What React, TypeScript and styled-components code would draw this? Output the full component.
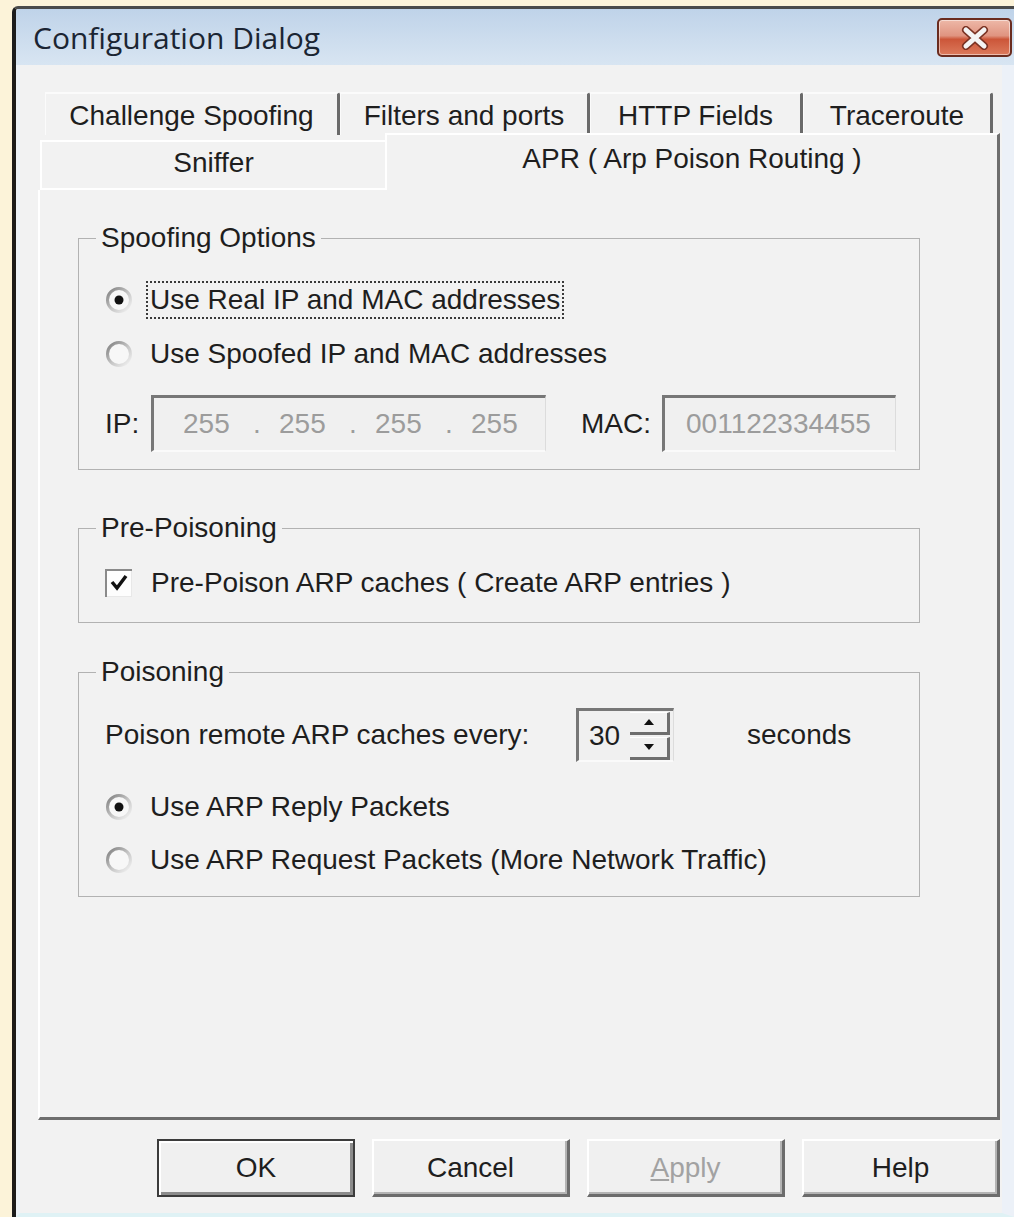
import React from "react";
import styled, { createGlobalStyle } from "styled-components";

const GlobalStyle = createGlobalStyle`
  html, body {
    margin: 0;
    padding: 0;
    background: #fcf3d9;
    overflow: hidden;
  }
  body {
    font-family: "Liberation Sans", Arial, sans-serif;
    color: #1e1e1e;
  }
`;

const Desktop = styled.div`
  width: 1014px;
  height: 1217px;
  padding: 6px 0 0 12px;
  box-sizing: border-box;
  overflow: hidden;
`;

const Window = styled.div`
  width: 1002px;
  box-sizing: border-box;
  border-left: 4px solid #1c1c1c;
  border-top: 3px solid #4a4a4a;
  border-top-left-radius: 6px;
  overflow: hidden;
`;

const TitleBar = styled.div`
  height: 56px;
  display: flex;
  align-items: flex-start;
  justify-content: space-between;
  padding: 0 2px 0 17px;
  background: linear-gradient(#bfd3e9, #d8e5f2);
`;

const Title = styled.div`
  font-family: "Open Sans", "Noto Sans", sans-serif;
  font-size: 30px;
  line-height: 58px;
  color: #1b2533;
`;

const CloseButton = styled.div`
  margin-top: 9px;
  width: 75px;
  height: 39px;
  box-sizing: border-box;
  border: 2px solid #6a2c1f;
  border-radius: 5px;
  background: linear-gradient(#edb8a8 0%, #e09480 45%, #cc5639 55%, #dc7a5c 100%);
  box-shadow: inset 0 0 0 1px rgba(255, 255, 255, 0.5);
  display: flex;
  align-items: center;
  justify-content: center;
`;

const Client = styled.div`
  display: flex;
  flex-direction: column;
  padding: 27px 2px 16px 18px;
  border-left: 4px solid #eef3f9;
  border-right: 12px solid #ecf1f8;
  border-bottom: 4px solid #dff2f5;
  background: #f2f2f2;
`;

/* ---------- tabs ---------- */

const TabRow = styled.div<{ $h: number; $indent: number }>`
  display: flex;
  align-items: flex-end;
  height: ${(p) => p.$h}px;
  margin-left: ${(p) => p.$indent}px;
`;

const BackTab = styled.div<{ $w: number }>`
  width: ${(p) => p.$w}px;
  height: 43px;
  align-self: flex-start;
  box-sizing: border-box;
  padding-top: 3px;
  border-top: 2px solid #fbfbfb;
  border-left: 1px solid #fbfbfb;
  border-right: 3px solid #6a6a6a;
  border-top-right-radius: 3px;
  font-size: 28px;
  display: flex;
  align-items: center;
  justify-content: center;
`;

const FrontTab = styled.div<{ $w: number; $h: number; $active?: boolean }>`
  width: ${(p) => p.$w}px;
  height: ${(p) => p.$h}px;
  box-sizing: border-box;
  padding-bottom: ${(p) => (p.$active ? 7 : 4)}px;
  border-top: 2px solid #fff;
  border-left: 2px solid #fff;
  border-right: ${(p) => (p.$active ? "3px solid #6e6e6e" : "none")};
  border-bottom: ${(p) => (p.$active ? "none" : "2px solid #fff")};
  background: #f2f2f2;
  font-size: 28px;
  display: flex;
  align-items: center;
  justify-content: center;
`;

const Panel = styled.div`
  width: 962px;
  height: 930px;
  box-sizing: border-box;
  padding: 32px 0 0 38px;
  border-left: 2px solid #fff;
  border-right: 3px solid #6e6e6e;
  border-bottom: 3px solid #6e6e6e;
  background: #f2f2f2;
`;

/* ---------- group boxes ---------- */

const Group = styled.fieldset<{ $mt: number; $pt: number; $pb: number }>`
  margin: ${(p) => p.$mt}px 0 0 0;
  width: 842px;
  min-inline-size: 0;
  box-sizing: border-box;
  padding: ${(p) => p.$pt}px 0 ${(p) => p.$pb}px 26px;
  border: 1px solid #b2b2b2;
`;

const Legend = styled.legend`
  margin-left: -9px;
  padding: 0 5px;
  font-size: 28px;
  line-height: 32px;
`;

const Row = styled.div<{ $h: number; $mt?: number; $gap?: number }>`
  display: flex;
  align-items: center;
  height: ${(p) => p.$h}px;
  margin-top: ${(p) => p.$mt ?? 0}px;
  gap: ${(p) => p.$gap ?? 0}px;
  font-size: 28px;
`;

const OptionText = styled.span<{ $focused?: boolean }>`
  line-height: 34px;
  padding: 0 2px;
  margin-left: -4px;
  border: 2px dotted ${(p) => (p.$focused ? "#3a3a3a" : "transparent")};
`;

const FieldLabel = styled.span<{ $w?: number }>`
  ${(p) => (p.$w ? `width: ${p.$w}px;` : "")}
  flex-shrink: 0;
`;

const SunkenBox = styled.div<{ $w: number; $h: number }>`
  width: ${(p) => p.$w}px;
  height: ${(p) => p.$h}px;
  box-sizing: border-box;
  border-top: 3px solid #777;
  border-left: 3px solid #777;
  border-right: 1px solid #dcdcdc;
  border-bottom: 2px solid #fafafa;
  background: #f0f0f0;
  display: flex;
  align-items: center;
  font-size: 28px;
`;

const GreyValue = styled.span<{ $w?: number }>`
  color: #9c9c9c;
  ${(p) => (p.$w ? `width: ${p.$w}px;` : "")}
`;

const SpinArrows = styled.div`
  margin-left: auto;
  width: 40px;
  height: 48px;
  display: flex;
  flex-direction: column;
  justify-content: space-between;
`;

const SpinButton = styled.div`
  height: 23px;
  box-sizing: border-box;
  border-right: 3px solid #6e6e6e;
  border-bottom: 3px solid #6e6e6e;
  border-top: 1px solid #fff;
  display: flex;
  align-items: center;
  justify-content: center;
`;

/* ---------- bottom buttons ---------- */

const ButtonBar = styled.div`
  width: 962px;
  margin-top: 19px;
  display: flex;
  justify-content: flex-end;
  gap: 17px;
`;

const DialogButton = styled.div<{ $default?: boolean; $disabled?: boolean }>`
  width: 198px;
  height: 58px;
  box-sizing: border-box;
  background: #f0f0f0;
  font-size: 28px;
  color: ${(p) => (p.$disabled ? "#a2a2a2" : "#1e1e1e")};
  display: flex;
  align-items: center;
  justify-content: center;
  border-style: solid;
  ${(p) =>
    p.$default
      ? `border-width: 2px;
         border-color: #3c3c3c;
         box-shadow: inset 2px 2px 0 #fff, inset -3px -3px 0 #8c8c8c;`
      : `border-width: 2px 3px 3px 2px;
         border-color: #fff #6c6c6c #6c6c6c #fff;
         box-shadow: inset -2px -2px 0 #b4b4b4;`}
`;

/* ---------- small drawn controls ---------- */

const RadioMark = ({ checked }: { checked?: boolean }) => (
  <svg width="28" height="28" viewBox="0 0 28 28">
    <defs>
      <linearGradient id={checked ? "rOn" : "rOff"} x1="0" y1="0" x2="1" y2="1">
        <stop offset="0" stopColor="#7e7e7e" />
        <stop offset="0.55" stopColor="#c8c8c8" />
        <stop offset="1" stopColor="#f4f4f4" />
      </linearGradient>
    </defs>
    <circle
      cx="14"
      cy="14"
      r="11.5"
      fill="#f7f7f7"
      stroke={`url(#${checked ? "rOn" : "rOff"})`}
      strokeWidth="3"
    />
    {checked && <circle cx="14" cy="14" r="4.5" fill="#111" />}
  </svg>
);

const CheckMark = () => (
  <svg width="27" height="28" viewBox="0 0 27 28">
    <rect x="0" y="0" width="27" height="28" fill="#fdfdfd" />
    <path d="M0 28V0h27" fill="none" stroke="#8a8a8a" strokeWidth="4" />
    <path d="M27 2v26H2" fill="none" stroke="#e8e8e8" strokeWidth="2" />
    <path d="M7 13l5 6 9-12" fill="none" stroke="#111" strokeWidth="3.5" />
  </svg>
);

const CloseGlyph = () => (
  <svg width="30" height="24" viewBox="0 0 30 24">
    <path d="M6 4l18 16M24 4L6 20" stroke="#7a3324" strokeWidth="8" strokeLinecap="round" />
    <path d="M6 4l18 16M24 4L6 20" stroke="#f4f4f4" strokeWidth="5" strokeLinecap="round" />
  </svg>
);

const Arrow = ({ up }: { up?: boolean }) => (
  <svg width="10" height="6" viewBox="0 0 10 6">
    <path d={up ? "M5 0l5 6H0z" : "M0 0h10L5 6z"} fill="#111" />
  </svg>
);

const Octets = ["255", "255", "255", "255"];

const App = () => {
  return (
    <Desktop>
      <GlobalStyle />
      <Window>
        <TitleBar>
          <Title>Configuration Dialog</Title>
          <CloseButton>
            <CloseGlyph />
          </CloseButton>
        </TitleBar>

        <Client>
          <TabRow $h={41} $indent={7}>
            <BackTab $w={295}>Challenge Spoofing</BackTab>
            <BackTab $w={250}>Filters and ports</BackTab>
            <BackTab $w={213}>HTTP Fields</BackTab>
            <BackTab $w={190}>Traceroute</BackTab>
          </TabRow>
          <TabRow $h={57} $indent={2}>
            <FrontTab $w={345} $h={50}>
              Sniffer
            </FrontTab>
            <FrontTab $w={615} $h={57} $active>
              APR ( Arp Poison Routing )
            </FrontTab>
          </TabRow>

          <Panel>
            <Group $mt={0} $pt={19} $pb={17}>
              <Legend>Spoofing Options</Legend>
              <Row $h={54} $gap={17}>
                <RadioMark checked />
                <OptionText $focused>Use Real IP and MAC addresses</OptionText>
              </Row>
              <Row $h={54} $gap={17}>
                <RadioMark />
                <OptionText>Use Spoofed IP and MAC addresses</OptionText>
              </Row>
              <Row $h={57} $mt={14}>
                <FieldLabel $w={46}>IP:</FieldLabel>
                <SunkenBox $w={395} $h={57} style={{ paddingLeft: 29 }}>
                  {Octets.map((o, i) => (
                    <React.Fragment key={i}>
                      <GreyValue $w={70}>{o}</GreyValue>
                      {i < 3 && <GreyValue $w={26}>.</GreyValue>}
                    </React.Fragment>
                  ))}
                </SunkenBox>
                <FieldLabel $w={81} style={{ marginLeft: 35 }}>
                  MAC:
                </FieldLabel>
                <SunkenBox $w={234} $h={57} style={{ paddingLeft: 21 }}>
                  <GreyValue>001122334455</GreyValue>
                </SunkenBox>
              </Row>
            </Group>

            <Group $mt={42} $pt={12} $pb={12}>
              <Legend>Pre-Poisoning</Legend>
              <Row $h={54} $gap={20}>
                <CheckMark />
                <OptionText style={{ marginLeft: -5 }}>
                  Pre-Poison ARP caches ( Create ARP entries )
                </OptionText>
              </Row>
            </Group>

            <Group $mt={33} $pt={20} $pb={10}>
              <Legend>Poisoning</Legend>
              <Row $h={54}>
                <FieldLabel $w={471}>Poison remote ARP caches every:</FieldLabel>
                <SunkenBox $w={98} $h={54} style={{ padding: "0 3px 0 10px" }}>
                  <span>30</span>
                  <SpinArrows>
                    <SpinButton>
                      <Arrow up />
                    </SpinButton>
                    <SpinButton>
                      <Arrow />
                    </SpinButton>
                  </SpinArrows>
                </SunkenBox>
                <FieldLabel style={{ marginLeft: 73 }}>seconds</FieldLabel>
              </Row>
              <Row $h={53} $mt={18} $gap={17}>
                <RadioMark checked />
                <OptionText>Use ARP Reply Packets</OptionText>
              </Row>
              <Row $h={53} $gap={17}>
                <RadioMark />
                <OptionText>Use ARP Request Packets (More Network Traffic)</OptionText>
              </Row>
            </Group>
          </Panel>

          <ButtonBar>
            <DialogButton $default>OK</DialogButton>
            <DialogButton>Cancel</DialogButton>
            <DialogButton $disabled>
              <span>
                <u>A</u>pply
              </span>
            </DialogButton>
            <DialogButton>Help</DialogButton>
          </ButtonBar>
        </Client>
      </Window>
    </Desktop>
  );
};

export default App;
